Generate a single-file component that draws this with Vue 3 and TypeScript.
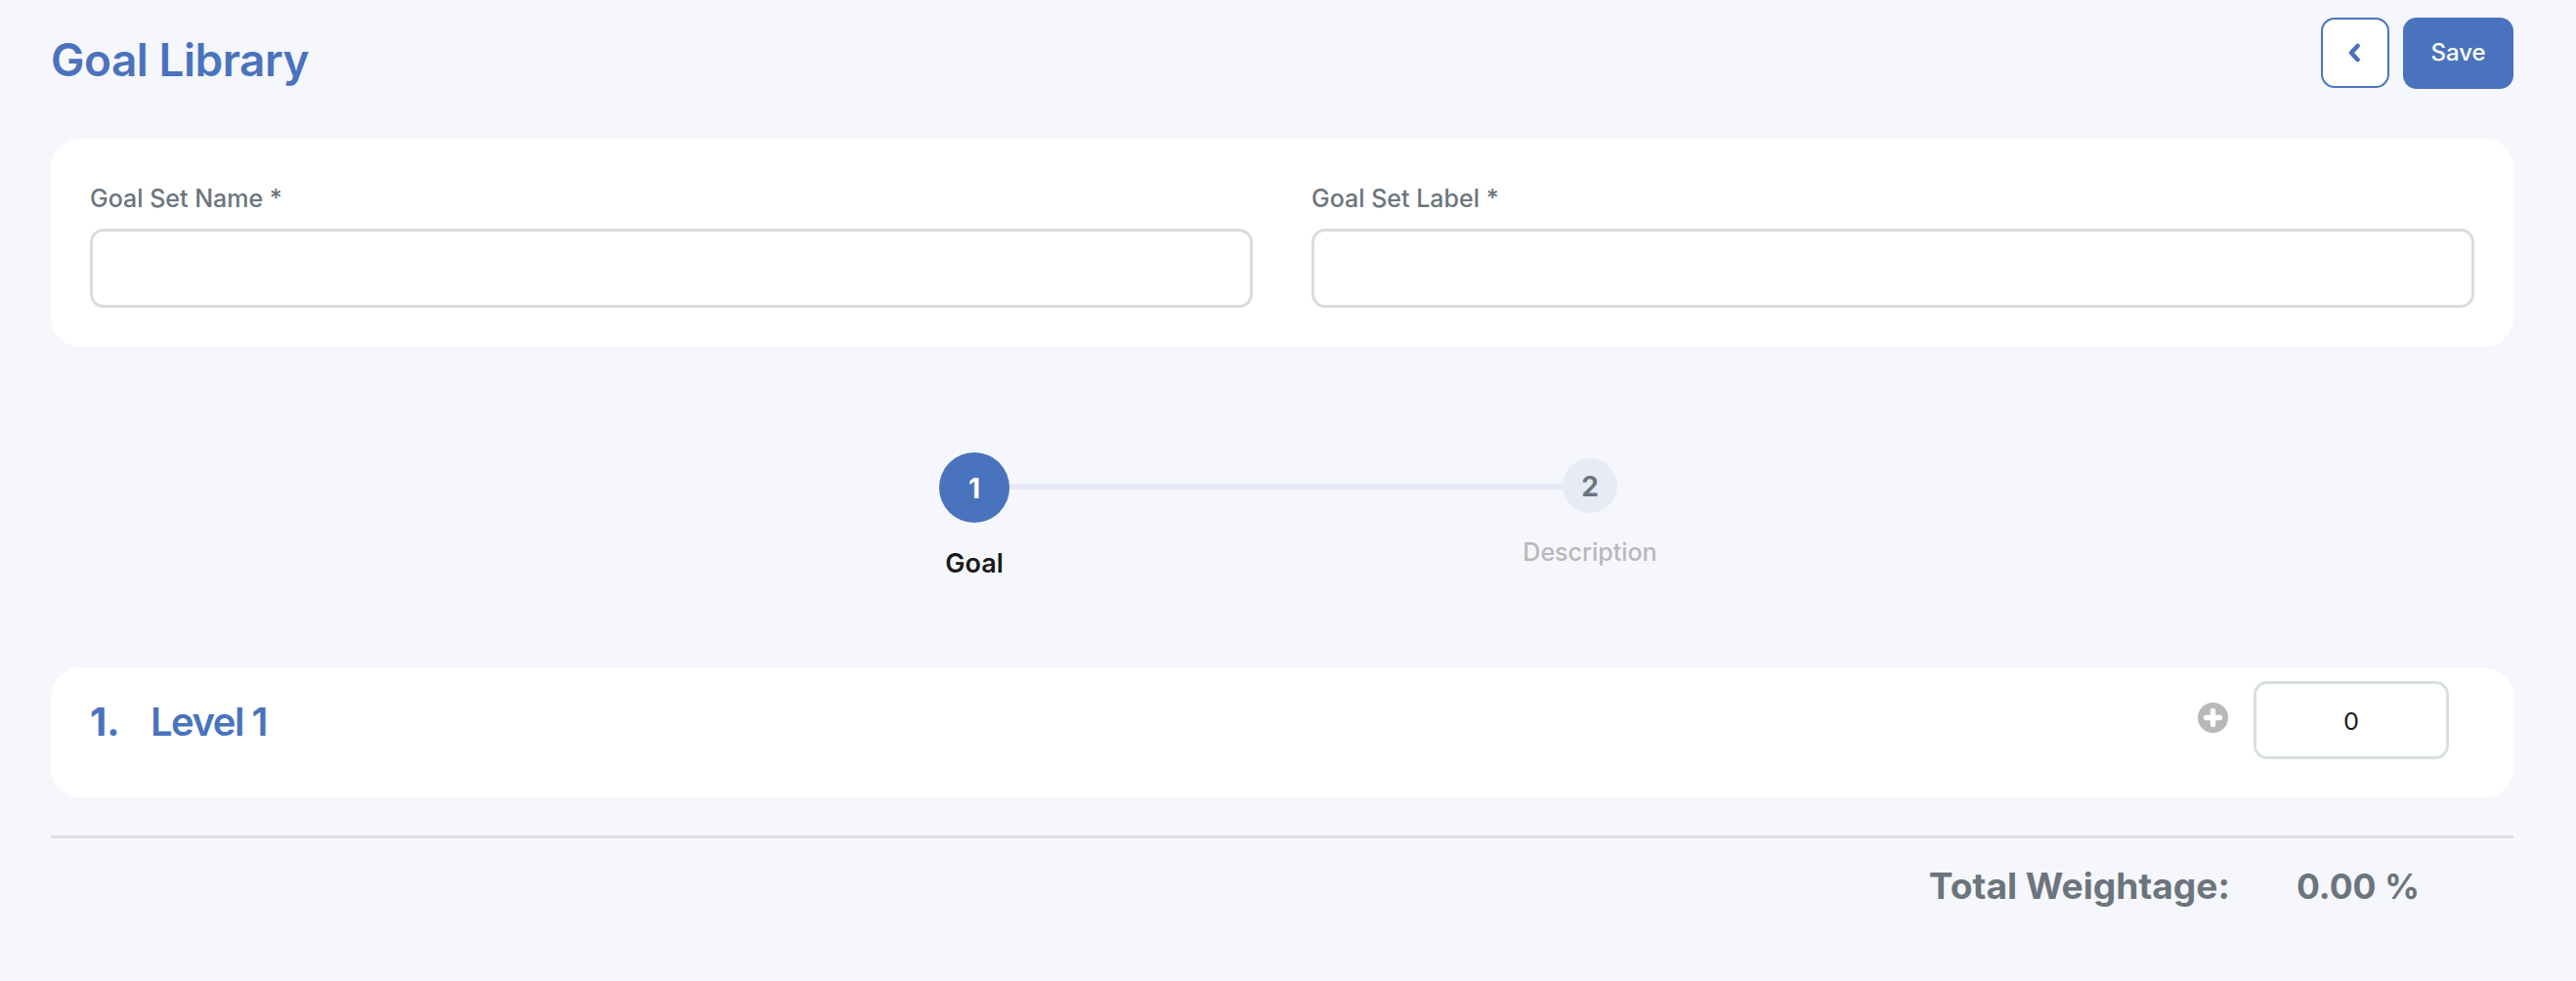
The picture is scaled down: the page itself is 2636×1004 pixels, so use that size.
<script setup lang="ts">
import { ref } from 'vue'

const goalSetName = ref('')
const goalSetLabel = ref('')
const weight = ref('0')

const steps = [
  { id: 1, label: 'Goal', active: true },
  { id: 2, label: 'Description', active: false },
]
</script>

<template>
  <div class="page">
    <header class="page-header">
      <h1 class="page-title">Goal Library</h1>
      <div class="actions">
        <button class="btn-back" aria-label="Back">
          <svg width="14" height="20" viewBox="0 0 14 20" fill="none">
            <path d="M10.5 3L4 10l6.5 7" stroke="currentColor" stroke-width="4.6" stroke-linecap="round" stroke-linejoin="round" />
          </svg>
        </button>
        <button class="btn-save">Save</button>
      </div>
    </header>

    <section class="card form-card">
      <label class="field">
        <span class="field-label">Goal Set Name *</span>
        <input v-model="goalSetName" class="field-input" type="text" />
      </label>
      <label class="field">
        <span class="field-label">Goal Set Label *</span>
        <input v-model="goalSetLabel" class="field-input" type="text" />
      </label>
    </section>

    <div class="stepper">
      <div v-for="step in steps" :key="step.id" class="step" :class="{ active: step.active }">
        <div class="step-circle">{{ step.id }}</div>
        <div class="step-label">{{ step.label }}</div>
      </div>
    </div>

    <section class="card level-card">
      <div class="level-title">
        <span class="level-number">1.</span>
        <span>Level 1</span>
      </div>
      <button class="btn-add" aria-label="Add level">
        <svg width="31" height="31" viewBox="0 0 31 31">
          <circle cx="15.5" cy="15.5" r="15.5" fill="#b8b8b8" />
          <path d="M15.5 8.5v14M8.5 15.5h14" stroke="#fff" stroke-width="5.4" stroke-linecap="round" />
        </svg>
      </button>
      <input v-model="weight" class="weight-input" type="text" />
    </section>

    <div class="total">
      <span class="total-label">Total Weightage:</span>
      <span class="total-value">0.00 %</span>
    </div>
  </div>
</template>

<style>
html,
body {
  background: #f6f7fc;
}
</style>

<style scoped>
.page {
  box-sizing: border-box;
  min-height: 1004px;
  padding: 18px 64px 0 52px;
  background: #f6f7fc;
  font-family: Inter, "Liberation Sans", sans-serif;
}

.page-header {
  display: flex;
  align-items: flex-start;
  justify-content: space-between;
  height: 73px;
  margin-bottom: 51px;
}

.page-title {
  margin: 18px 0 0;
  font-size: 46px;
  line-height: 50px;
  font-weight: 600;
  letter-spacing: -0.5px;
  color: #4a73bd;
}

.actions {
  display: flex;
  gap: 14px;
}

.btn-back {
  display: flex;
  align-items: center;
  justify-content: center;
  box-sizing: border-box;
  width: 70px;
  height: 72px;
  padding: 0 2px 0 0;
  background: #fff;
  border: 2px solid #4a73bd;
  border-radius: 14px;
  color: #4a73bd;
}

.btn-save {
  width: 113px;
  height: 73px;
  padding: 0 0 2px;
  background: #4a73bd;
  border: none;
  border-radius: 14px;
  color: #fff;
  font-family: inherit;
  font-size: 24px;
  font-weight: 500;
}

.card {
  background: #fff;
  border-radius: 30px;
}

.form-card {
  display: grid;
  grid-template-columns: 1fr 1fr;
  column-gap: 60px;
  height: 213px;
  box-sizing: border-box;
  padding: 46px 40px 0;
}

.field {
  display: block;
}

.field-label {
  display: block;
  height: 46px;
  font-size: 25px;
  line-height: 30px;
  font-weight: 500;
  color: #6c757d;
}

.field-input {
  display: block;
  box-sizing: border-box;
  width: 100%;
  height: 81px;
  background: #fff;
  border: 3px solid #d8dce0;
  border-radius: 14px;
  outline: none;
}

.stepper {
  position: relative;
  display: grid;
  grid-template-columns: 630px 630px;
  justify-content: center;
  margin-top: 108px;
  height: 221px;
}

.step {
  display: flex;
  flex-direction: column;
  align-items: center;
  position: relative;
}

.step-circle {
  display: flex;
  align-items: center;
  justify-content: center;
  width: 56px;
  height: 56px;
  margin-top: 6px;
  padding-top: 2px;
  box-sizing: border-box;
  border-radius: 50%;
  background: #e6ebf5;
  color: #6c757d;
  font-size: 28px;
  font-weight: 700;
}

.step.active .step-circle {
  width: 72px;
  height: 72px;
  margin-top: 0;
  background: #4a73bd;
  color: #fff;
}

/* connector between the two circles */
.step.active::after {
  content: '';
  position: absolute;
  top: 32px;
  left: calc(50% + 36px);
  width: 567px;
  height: 6px;
  background: #e6e8f3;
}

.step-label {
  margin-top: 25px;
  font-size: 25px;
  line-height: 30px;
  font-weight: 500;
  color: #b8b8b8;
}

.step.active .step-label {
  margin-top: 27px;
  font-size: 27px;
  font-weight: 600;
  color: #1a1a1a;
}

.level-card {
  display: flex;
  align-items: flex-start;
  height: 132px;
  box-sizing: border-box;
  padding: 13px 66px 0 40px;
}

.level-title {
  display: flex;
  margin-top: 17px;
  font-size: 40px;
  line-height: 50px;
  font-weight: 600;
  letter-spacing: -1.5px;
  color: #4a73bd;
}

.level-number {
  width: 62px;
  font-weight: 700;
  letter-spacing: 0;
}

.btn-add {
  display: flex;
  margin: 22px 0 0 auto;
  padding: 0;
  background: none;
  border: none;
}

.weight-input {
  box-sizing: border-box;
  width: 200px;
  height: 80px;
  margin-left: 26px;
  padding: 0;
  background: #fff;
  border: 3px solid #d8dfe0;
  border-radius: 14px;
  outline: none;
  text-align: center;
  font-family: Lato, sans-serif;
  font-size: 25px;
  color: #1a1a1a;
}

.total {
  display: flex;
  align-items: baseline;
  justify-content: flex-end;
  margin-top: 39px;
  padding: 26px 96px 0 0;
  border-top: 3px solid #dfe0e3;
  line-height: 46px;
  font-weight: 700;
  color: #6c757d;
}

.total-label {
  font-size: 37.2px;
}

.total-value {
  margin-left: 68px;
  font-size: 35.5px;
}
</style>
